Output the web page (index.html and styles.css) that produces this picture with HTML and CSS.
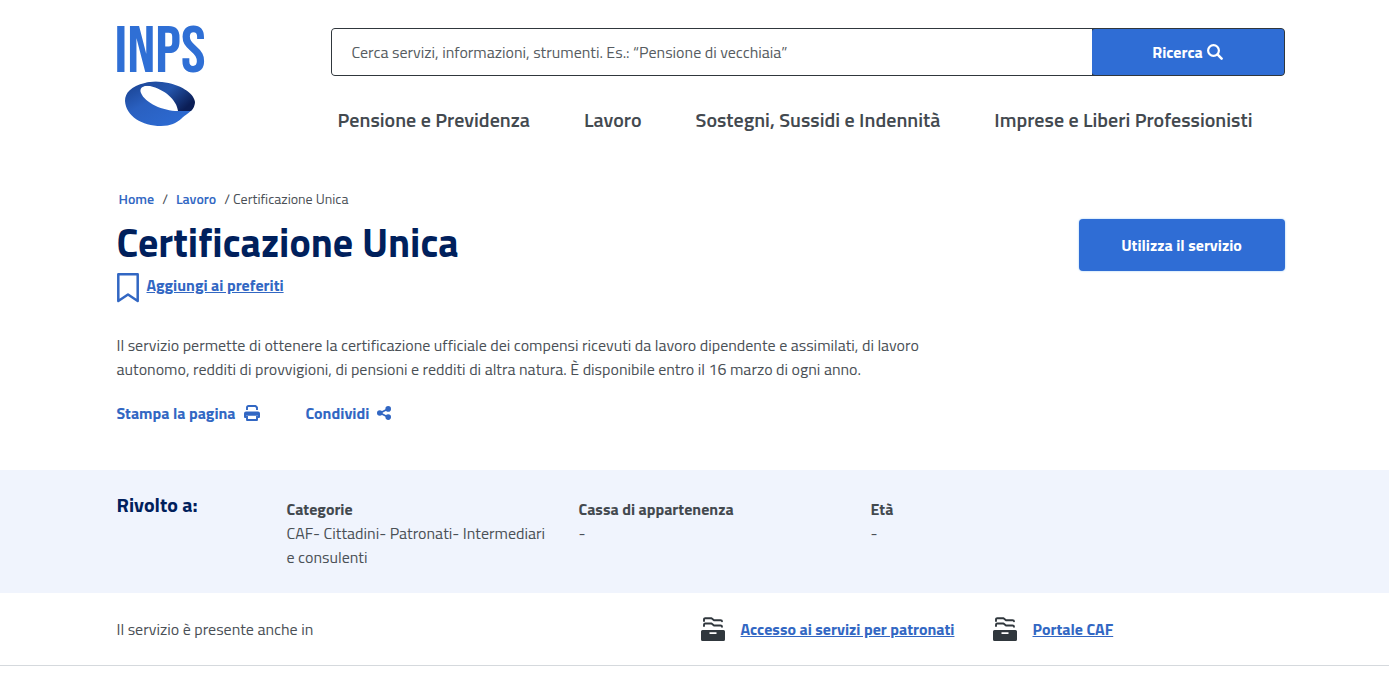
FILE: index.html
```html
<!DOCTYPE html>
<html lang="it">
<head>
<meta charset="utf-8">
<meta name="viewport" content="width=device-width, initial-scale=1">
<title>Certificazione Unica - INPS</title>
<link rel="stylesheet" href="styles.css">
</head>
<body>
<svg class="sprite" aria-hidden="true">
  <symbol id="archive" viewBox="0 0 24 24">
    <path fill="currentColor" fill-rule="evenodd" d="M0 14.500Q0 13 1.500 13H22.500Q24 13 24 14.500V22.500Q24 24 22.500 24H1.500Q0 24 0 22.500ZM8.500 15.200V17H15.500V15.200Z"/>
    <path fill="none" stroke="currentColor" stroke-width="1.900" stroke-linecap="round" stroke-linejoin="round" d="M3 4V2.400Q3 1.200 4.300 1.200H10.500L13 3.200H19.500Q21 3.200 21 4.200M3 9V7.700Q3 6.500 4.300 6.500H10.500L13 8.500H19.500Q21 8.500 21 9.800"/>
  </symbol>
</svg>
<header class="container header">
  <a class="logo" href="#" aria-label="INPS, pagina iniziale">
    <span class="logo-text">INPS</span>
    <svg class="logo-ring" viewBox="0 0 70 46" aria-hidden="true">
      <defs>
        <linearGradient id="band" x1="0" y1="0" x2=".8" y2="1"><stop offset="0" stop-color="#183f8c"/><stop offset=".45" stop-color="#2a60c0"/><stop offset="1" stop-color="#2d6bd3"/></linearGradient>
        <linearGradient id="fold" x1="0" y1="0" x2="1" y2=".6"><stop offset="0" stop-color="#1f4a9c"/><stop offset=".5" stop-color="#2455ac"/><stop offset="1" stop-color="#0b1e56"/></linearGradient>
      </defs>
      <path fill="url(#band)" d="M20 2C6 5 0 12 0 20C1 35 17 45 36 45C46 45 51 42 56 38C61 33 66 31 68 27L53 30C38 30 20 22 16 12C14 7 18 4 25 5L36 1Q27 0 20 2Z"/>
      <path fill="url(#fold)" d="M20 2Q28 0 37 1C55 3 69 12 70 21Q70 26 66 30H53C52 19 39 8 25 5Q20 4 17 6Z"/>
    </svg>
  </a>
  <div class="header-main">
    <form class="search">
      <input class="search-input" type="search" aria-label="Cerca nel sito" placeholder="Cerca servizi, informazioni, strumenti. Es.: “Pensione di vecchiaia”">
      <button class="search-button" type="button">Ricerca
        <svg class="icon-search" viewBox="0 0 16 16" aria-hidden="true"><g fill="none" stroke="currentColor" stroke-width="2.200"><circle cx="6.500" cy="6.500" r="5.400"/><path stroke-linecap="round" stroke-width="2.600" d="M10.700 10.700L14.600 14.600"/></g></svg>
      </button>
    </form>
    <nav class="nav" aria-label="Principale">
      <a href="#">Pensione e Previdenza</a>
      <a href="#">Lavoro</a>
      <a href="#">Sostegni, Sussidi e Indennità</a>
      <a href="#">Imprese e Liberi Professionisti</a>
    </nav>
  </div>
</header>
<main>
  <section class="container intro">
    <div class="intro-text">
      <nav class="breadcrumb" aria-label="Percorso">
        <a href="#">Home</a><span>/</span><a href="#">Lavoro</a><span class="current"><span>/</span> Certificazione Unica</span>
      </nav>
      <h1>Certificazione Unica</h1>
      <a class="favourite" href="#">
        <svg class="icon-bookmark" viewBox="0 0 22 30" aria-hidden="true"><path fill="none" stroke="currentColor" stroke-width="2.500" stroke-linejoin="round" d="M1.300 1.300H20.700V28L11 21.500L1.300 28Z"/></svg>
        <span>Aggiungi ai preferiti</span>
      </a>
      <p class="description">Il servizio permette di ottenere la certificazione ufficiale dei compensi ricevuti da lavoro dipendente e assimilati, di lavoro autonomo, redditi di provvigioni, di pensioni e redditi di altra natura. È disponibile entro il 16 marzo di ogni anno.</p>
      <div class="actions">
        <button class="action" type="button">Stampa la pagina
          <svg class="icon-action" viewBox="0 0 16 16" aria-hidden="true"><path fill="none" stroke="currentColor" stroke-width="1.900" stroke-linejoin="round" d="M3 5V2.500Q3 1 4.500 1H11.500L13 2.500V5M3 11V15H13V11"/><path fill="currentColor" d="M2 6.500H14Q16 6.500 16 8.500V12Q16 13 15 13H14V10.800H2V13H1Q0 13 0 12V8.500Q0 6.500 2 6.500Z"/></svg>
        </button>
        <button class="action" type="button">Condividi
          <svg class="icon-action icon-share" viewBox="0 0 16 16" aria-hidden="true"><path fill="none" stroke="currentColor" stroke-width="2" d="M13 3.200L3.500 8L13 12.800"/><g fill="currentColor"><circle cx="12.800" cy="3.300" r="3.200"/><circle cx="3.200" cy="8" r="3.200"/><circle cx="12.800" cy="12.700" r="3.200"/></g></svg>
        </button>
      </div>
    </div>
    <button class="use-service" type="button">Utilizza il servizio</button>
  </section>
  <section class="audience">
    <div class="container audience-grid">
      <h2>Rivolto a:</h2>
      <div><h3>Categorie</h3><p>CAF- Cittadini- Patronati- Intermediari<br>e consulenti</p></div>
      <div><h3>Cassa di appartenenza</h3><p>-</p></div>
      <div><h3>Età</h3><p>-</p></div>
    </div>
  </section>
  <section class="related">
    <div class="container related-grid">
      <p>Il servizio è presente anche in</p>
      <a href="#"><svg class="icon-archive" aria-hidden="true"><use href="#archive"/></svg><span>Accesso ai servizi per patronati</span></a>
      <a href="#"><svg class="icon-archive" aria-hidden="true"><use href="#archive"/></svg><span>Portale CAF</span></a>
    </div>
  </section>
</main>
</body>
</html>
```
FILE: styles.css
```css
* { box-sizing: border-box; }
body {
  margin: 0;
  background: #fff;
  color: #4a5056;
  font: 400 16px/24px "Titillium Web", Roboto, sans-serif;
}
h1, h2, h3, p { margin: 0; }
a { color: #3267c3; text-decoration: none; }
button, input { font: inherit; }
button { border: 0; cursor: pointer; }
svg { flex: none; }
.sprite { position: absolute; width: 0; height: 0; }
.container { max-width: 1180px; margin: 0 auto; padding-left: 12px; }

.header { display: grid; grid-template-columns: 214px 1fr; padding-top: 24px; }
.logo { display: flex; flex-direction: column; align-items: center; justify-self: start; margin-left: -2px; }
.logo-text { color: #2f6fd5; font: 400 66px/57px "Bebas Neue", "Roboto Condensed", sans-serif; }
.logo-ring { width: 70px; height: 46px; }
.header-main { padding-top: 4px; }
.search { display: flex; height: 48px; border: 1px solid #30373d; border-radius: 4px; background: #30373d; }
.search-input { flex: 1; min-width: 0; padding: 0 20px; border: 0; border-radius: 3px 0 0 3px; background: #fff; color: inherit; }
.search-input::placeholder { color: #565c61; opacity: 1; }
.search-button {
  display: flex; align-items: center; justify-content: center; gap: 4px;
  width: 192px; border-radius: 3px; background: #2f6dd5; color: #fff; font-weight: 700;
}
.icon-search { width: 16px; height: 16px; }
.nav { display: flex; gap: 54px; padding: 32px 0 0 7px; white-space: nowrap; }
.nav a { color: #43494f; font-size: 20px; font-weight: 600; }

.intro { display: flex; justify-content: space-between; align-items: flex-start; padding-top: 55px; padding-bottom: 45px; }
.intro-text { max-width: 826px; }
.breadcrumb { display: flex; gap: 8px; padding-left: 2px; font-size: 14px; }
.breadcrumb a { font-weight: 600; }
h1 { margin-top: 8px; color: #00205c; font-size: 40px; font-weight: 700; line-height: 48px; }
.favourite { display: flex; gap: 8px; margin-top: 6px; font-weight: 700; }
.favourite span, .related-grid a span { text-decoration: underline; }
.icon-bookmark { width: 22px; height: 30px; }
.description { margin-top: 30px; }
.actions { display: flex; gap: 46px; margin-top: 20px; }
.action { display: flex; align-items: center; gap: 8px; padding: 0; background: none; color: #3267c3; font-weight: 700; }
.icon-action { width: 16px; height: 16px; }
.icon-share { width: 14px; height: 14px; }
.use-service {
  width: 206px; height: 52px; margin-top: 32px; border-radius: 4px;
  background: #2f6dd5; box-shadow: 0 0 2px #8fc4f4; color: #fff; font-weight: 700;
}

.audience { padding: 27px 0 24px; background: #f0f4fd; }
.audience-grid { display: grid; grid-template-columns: 170px 292px 292px 1fr; }
h2 { margin-top: -4px; color: #00205c; font-size: 20px; font-weight: 700; }
h3 { color: #43494f; font-size: 16px; font-weight: 700; }
.related { padding: 24px 0; border-bottom: 1px solid #d5d9dd; }
.related-grid { display: grid; grid-template-columns: 1fr 292px 292px; align-items: center; }
.related-grid a { display: flex; align-items: center; gap: 16px; font-weight: 700; }
.icon-archive { width: 24px; height: 24px; color: #30373d; }
```
